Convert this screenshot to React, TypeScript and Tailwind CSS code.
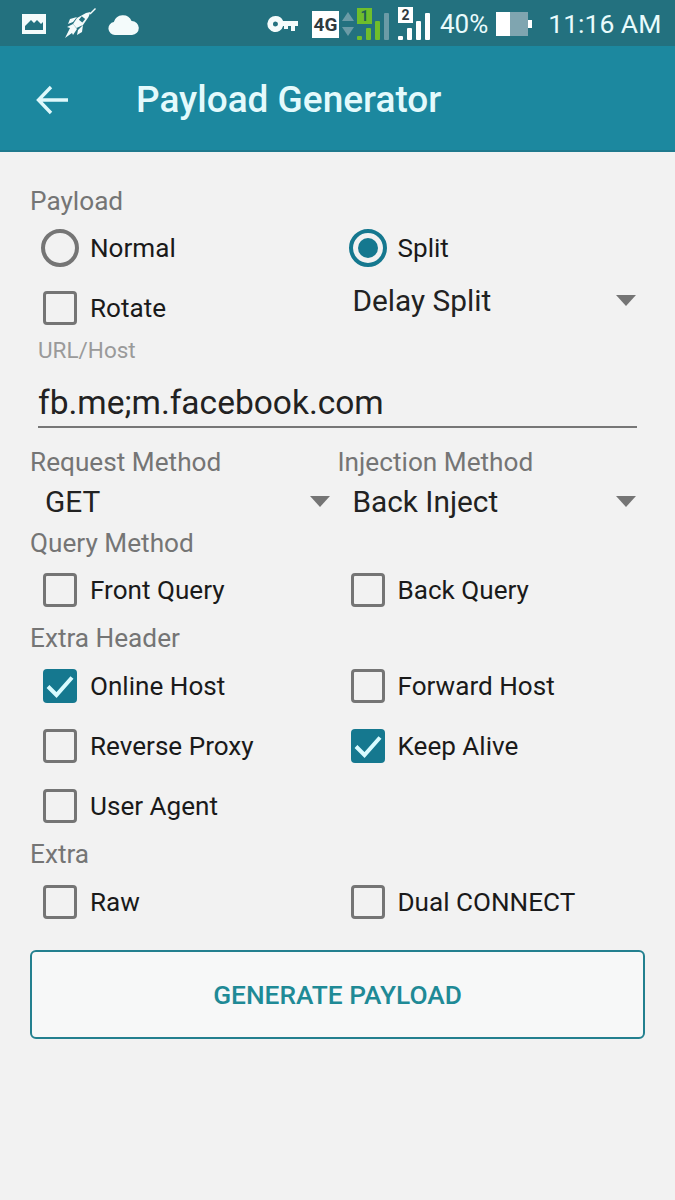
import { FC } from 'react'

const font = 'font-["Roboto",sans-serif]'

const Label: FC<{ text: string; className?: string }> = ({ text, className = '' }) => (
  <div className={`flex h-[34px] items-center text-[26.200px] leading-none text-[#757575] ${className}`}>{text}</div>
)

const Check: FC<{ label: string; checked?: boolean }> = ({ label, checked }) => (
  <div className="flex h-[60px] items-center">
    <div className="flex w-[60px] shrink-0 justify-center">
      {checked ? (
        <div className="flex h-[34px] w-[34px] items-center justify-center rounded-[4px] bg-[#15788f]">
          <svg width="28" height="24" viewBox="0 0 28 24" fill="none">
            <path d="M2 12.500 10.500 21 26 3.500" stroke="#d9fbff" strokeWidth="4" />
          </svg>
        </div>
      ) : (
        <div className="h-[34px] w-[34px] rounded-[4px] border-[3.500px] border-[#757575]" />
      )}
    </div>
    <span className="text-[26.100px] leading-none text-[#1a1a1a]">{label}</span>
  </div>
)

const Radio: FC<{ label: string; checked?: boolean }> = ({ label, checked }) => (
  <div className="flex h-[60px] items-center">
    <div className="flex w-[60px] shrink-0 justify-center">
      {checked ? (
        <div className="flex h-[38px] w-[38px] items-center justify-center rounded-full border-[4px] border-[#15788f]">
          <div className="h-[20px] w-[20px] rounded-full bg-[#15788f]" />
        </div>
      ) : (
        <div className="h-[38px] w-[38px] rounded-full border-[4px] border-[#757575]" />
      )}
    </div>
    <span className="text-[26.100px] leading-none text-[#1a1a1a]">{label}</span>
  </div>
)

const Select: FC<{ value: string; className?: string }> = ({ value, className = '' }) => (
  <div className={`flex h-[46px] items-center justify-between pl-[15px] ${className}`}>
    <span className="text-[29.800px] leading-none text-[#222222]">{value}</span>
    <svg width="20" height="12" viewBox="0 0 20 12">
      <path d="M0 0h20L10 11z" fill="#757575" />
    </svg>
  </div>
)

const Bars: FC<{ colors: string[] }> = ({ colors }) => (
  <div className="flex h-[26px] items-end gap-[4px]">
    {colors.map((c, i) => (
      <div key={i} className="w-[5px] rounded-[1px]" style={{ height: 4 + i * 7.4, background: c }} />
    ))}
  </div>
)

const StatusBar = () => (
  <div className="flex h-[46px] items-center whitespace-nowrap bg-[#23717f] pl-[21px] pt-[2px] text-white">
    <svg width="26" height="22" viewBox="0 0 26 22">
      <path fillRule="evenodd" d="M1 1h24v20H1zM4 17h18V9l-2 2-4-4-3 3-3-3-6 6z" fill="#f4fbfb" />
    </svg>
    <svg className="ml-[17px] mt-[-2px]" width="32" height="30" viewBox="0 0 32 30">
      <path d="M31 0 25.500 5.500l1 1L32 1z" fill="#f4fbfb" />
      <path d="M26.500 4 22 5l-9 5-4 6 3.500 4 6.500-3 5.500-8z" fill="#f4fbfb" />
      <path d="M13 9 6 11l-2 5 5-2zM19 17l-1 7-5 3 1-5z" fill="#f4fbfb" />
      <path d="M9 16l-6 3 3 1-5 10 7-5 1 2 4-6z" fill="#f4fbfb" />
      <rect x="16" y="9" width="4.500" height="4.500" transform="rotate(40 18 11)" fill="#23717f" />
    </svg>
    <svg className="ml-[12px]" width="31" height="22" viewBox="0 0 31 22">
      <path d="M7 22a6.500 6.500 0 0 1-1.200-12.900A9.500 9.500 0 0 1 23.600 8 7 7 0 0 1 24 22z" fill="#f4fbfb" />
    </svg>
    <svg className="ml-[128px]" width="31" height="18" viewBox="0 0 31 18">
      <path fillRule="evenodd" d="M8.500 1a8 8 0 0 1 7.600 5H31v5h-3v5h-4v-5h-3v3h-4v-3h-.9a8 8 0 1 1-7.600-10zm0 5.500a2.500 2.500 0 1 0 0 5 2.500 2.500 0 0 0 0-5z" fill="#f4fbfb" />
    </svg>
    <div className="ml-[14px] flex h-[27px] w-[27px] items-center justify-center bg-white text-[19px] font-bold leading-none text-[#2f3a3f]">
      4G
    </div>
    <svg className="ml-[2px]" width="14" height="26" viewBox="0 0 14 26">
      <path d="M7 1l6 9H1z" fill="#6b9ba6" />
      <path d="M7 25l6-9H1z" fill="#6b9ba6" />
    </svg>
    <div className="relative ml-[2px] mt-[5px]">
      <Bars colors={['#6fbe2b', '#6fbe2b', '#6fbe2b', '#6b9ba6']} />
      <div className="absolute left-0 top-[-6px] flex h-[16px] w-[15px] items-center justify-center bg-[#6fbe2b] text-[14px] font-bold leading-none text-[#1f5f55]">
        1
      </div>
    </div>
    <div className="relative ml-[9px] mt-[5px]">
      <Bars colors={['#ffffff', '#ffffff', '#ffffff', '#ffffff']} />
      <div className="absolute left-0 top-[-7px] flex h-[16px] w-[15px] items-center justify-center bg-white text-[14px] font-bold leading-none text-[#2f3a3f]">
        2
      </div>
    </div>
    <span className="ml-[10px] text-[26px] leading-none text-[#e9fbfc]">40%</span>
    <div className="ml-[8px] flex h-[24px] w-[32px] bg-[#7fa5b0]">
      <div className="h-full w-[14px] bg-white" />
    </div>
    <div className="h-[8px] w-[4px] bg-white" />
    <span className="ml-[16px] text-[26.500px] leading-none text-[#e9fbfc]">11:16 AM</span>
  </div>
)

export default function App() {
  return (
    <div className={`flex h-[1200px] w-[675px] flex-col bg-[#f2f2f2] ${font}`}>
      <StatusBar />
      <div className="flex h-[106px] items-center border-b-2 border-[#1f7a8e] bg-[#1c889f] pt-[3px]">
        <svg className="ml-[36px]" width="34" height="30" viewBox="0 0 34 30" fill="none">
          <path d="M32 15H3M15 2 2.500 15 15 28" stroke="#dff8fb" strokeWidth="3.400" />
        </svg>
        <span className="ml-[66px] text-[37px] font-medium leading-none text-[#e4fafc]">Payload Generator</span>
      </div>

      <div className="flex flex-col pt-[32px]">
        <Label text="Payload" className="ml-[30px]" />
        <div className="grid grid-cols-[307.500px_1fr] pl-[30px] pr-[39px]">
          <div>
            <Radio label="Normal" />
            <Check label="Rotate" />
          </div>
          <div>
            <Radio label="Split" checked />
            <Select value="Delay Split" />
          </div>
        </div>

        <div className="ml-[38px] flex h-[24px] items-center text-[22.500px] leading-none text-[#9a9a9a]">URL/Host</div>
        <div className="mx-[38px] flex h-[66px] items-center border-b-2 border-[#777777] pt-[17px] text-[33.500px] leading-none text-[#222222]">
          fb.me;m.facebook.com
        </div>

        <div className="mt-[17px] grid grid-cols-[307.500px_1fr] pl-[30px] pr-[39px]">
          <div>
            <Label text="Request Method" />
            <Select value="GET" className="pr-[8px]" />
          </div>
          <div>
            <Label text="Injection Method" />
            <Select value="Back Inject" />
          </div>
        </div>

        <Label text="Query Method" className="ml-[30px] mt-[1px]" />
        <div className="grid grid-cols-[307.500px_1fr] pl-[30px] pr-[39px]">
          <Check label="Front Query" />
          <Check label="Back Query" />
        </div>

        <Label text="Extra Header" className="ml-[30px] mt-[1px]" />
        <div className="mt-[1px] grid grid-cols-[307.500px_1fr] pl-[30px] pr-[39px]">
          <Check label="Online Host" checked />
          <Check label="Forward Host" />
          <Check label="Reverse Proxy" />
          <Check label="Keep Alive" checked />
          <Check label="User Agent" />
        </div>

        <Label text="Extra" className="ml-[30px] mt-[1px]" />
        <div className="mt-[1px] grid grid-cols-[307.500px_1fr] pl-[30px] pr-[39px]">
          <Check label="Raw" />
          <Check label="Dual CONNECT" />
        </div>

        <button className="mx-[30px] mt-[18px] flex h-[89px] items-center justify-center rounded-[6px] border-2 border-[#23808f] bg-[#f7f8f8] pt-[2px] text-[26.300px] font-medium leading-none text-[#1f8a96]">
          GENERATE PAYLOAD
        </button>
      </div>
    </div>
  )
}
